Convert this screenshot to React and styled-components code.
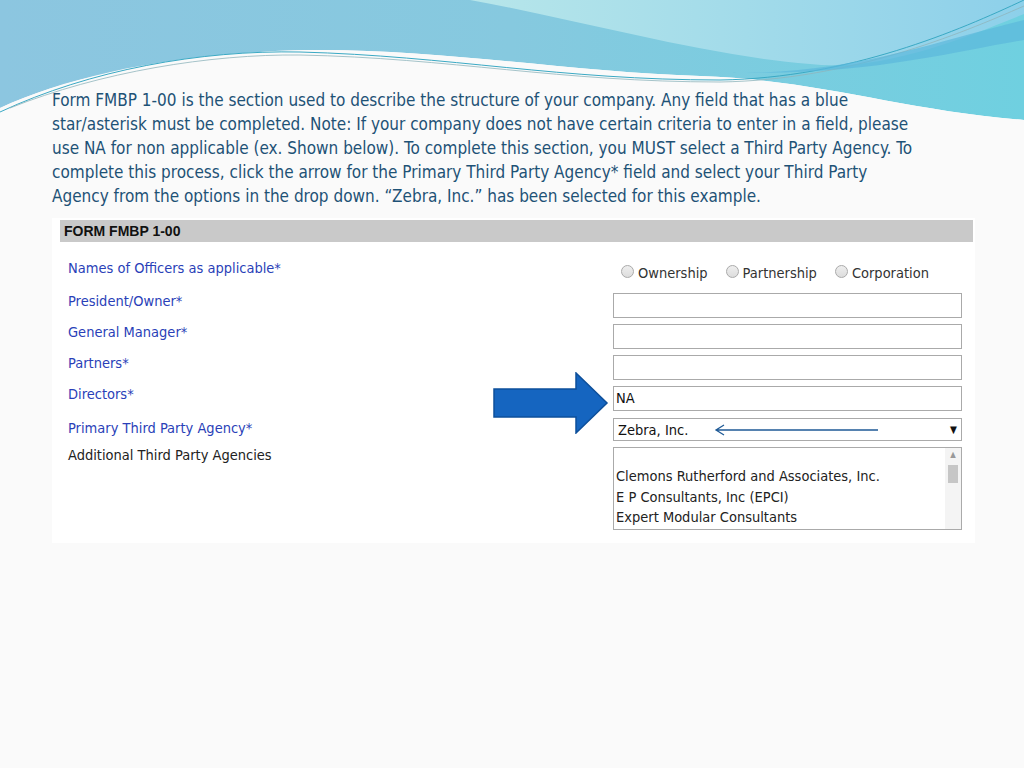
import React from 'react';
import styled, { createGlobalStyle } from 'styled-components';

const Global = createGlobalStyle`
  body { margin: 0; background: #fafafa; font-family: "Open Sans", "Liberation Sans", sans-serif; }
`;

const Slide = styled.div`
  position: relative;
  width: 1024px;
  height: 768px;
  overflow: hidden;
  background: #fafafa;
`;

const Wave = styled.svg`
  position: absolute;
  left: 0;
  top: 0;
`;

const Content = styled.div`
  position: relative;
  padding: 88px 0 0 52px;
`;

const Intro = styled.p`
  margin: 0;
  white-space: nowrap;
  font-family: "Liberation Sans Narrow", "DejaVu Sans Condensed", "Liberation Sans", sans-serif;
  font-size: 17px;
  line-height: 24px;
  color: #1e5276;
`;

const Panel = styled.div`
  position: relative;
  margin-top: 10px;
  width: 923px;
  height: 325px;
  background: #fff;
  padding: 2px 2px 0 8px;
  box-sizing: border-box;
`;

const FormHead = styled.div`
  height: 22px;
  background: #c9c9c9;
  font-family: "Liberation Sans", Arial, sans-serif;
  font-weight: bold;
  font-size: 14px;
  line-height: 22px;
  padding-left: 4px;
  color: #111;
`;

const Grid = styled.div`
  display: grid;
  grid-template-columns: 545px 349px;
  padding: 0 0 0 8px;
  font-family: "DejaVu Sans Condensed", "Liberation Sans", sans-serif;
  font-size: 14.5px;
`;

const Label = styled.div`
  color: ${p => (p.plain ? '#222' : '#2a3fb8')};
  height: ${p => p.h || 31}px;
  padding-top: ${p => p.pt || 0}px;
  box-sizing: border-box;
`;

const Cell = styled.div`
  height: ${p => p.h || 31}px;
  padding-top: ${p => p.pt || 0}px;
  box-sizing: border-box;
`;

const Radios = styled.div`
  display: flex;
  gap: 18px;
  padding-left: 8px;
  color: #333;
`;

const Radio = styled.span`
  display: flex;
  align-items: center;
  gap: 4px;
  &::before {
    content: '';
    width: 11px;
    height: 11px;
    border-radius: 50%;
    border: 1px solid #aaa;
    background: linear-gradient(#eee, #ddd);
    margin-top: -4px;
  }
`;

const Input = styled.div`
  height: 25px;
  border: 1px solid #aaa;
  box-sizing: border-box;
  padding: 3px 2px;
  color: #111;
  background: #fff;
`;

const Select = styled(Input)`
  height: 23px;
  padding: 2px 4px;
  display: flex;
  align-items: center;
  justify-content: space-between;
  position: relative;
`;

const ListBox = styled(Input)`
  height: 83px;
  padding: 18px 0 0 2px;
  position: relative;
  line-height: 20.5px;
  color: #222;
`;

const Scroll = styled.div`
  position: absolute;
  right: 0;
  top: 0;
  width: 16px;
  height: 100%;
  background: #f4f4f4;
  font-size: 8px;
  color: #999;
  text-align: center;
  line-height: 14px;
  & > i {
    display: block;
    width: 10px;
    height: 18px;
    margin: 3px auto;
    background: #c6c6c6;
  }
`;

const BigArrow = styled.svg`
  position: absolute;
  left: 441px;
  top: 154px;
`;

export default function App() {
  return (
    <Slide>
      <Global />
      <Wave width="1024" height="120" viewBox="0 0 1024 120">
        <defs>
          <linearGradient id="g1" x1="0" y1="0" x2="1" y2="0">
            <stop offset="0" stopColor="#8cc6e0" />
            <stop offset="0.5" stopColor="#86c9df" />
            <stop offset="1" stopColor="#6fd0e0" />
          </linearGradient>
          <linearGradient id="g2" x1="0" y1="0" x2="1" y2="0">
            <stop offset="0" stopColor="#b7e6ea" />
            <stop offset="1" stopColor="#8dd0ea" />
          </linearGradient>
        </defs>
        <path d="M0 0 H1024 V120 C900 110 820 80 700 76 C560 72 400 42 260 52 C150 60 60 80 0 108 Z" fill="url(#g1)" />
        <path d="M470 0 H1024 V14 C960 40 880 72 810 64 C700 55 580 20 470 0 Z" fill="url(#g2)" />
        <path d="M0 108 C60 80 150 58 260 52 C400 42 560 72 700 76 C820 80 900 110 1024 120 V120 H0 Z" fill="#fafafa" />
        <path d="M0 112 C90 70 200 50 300 52 C450 56 560 80 720 80 C850 78 960 30 1024 0" stroke="#3aa9c4" strokeWidth="1" fill="none" />
        <path d="M10 108 C100 72 210 54 300 55 C450 58 560 82 720 82 C850 80 960 34 1024 6" stroke="#8fb5bd" strokeWidth="0.8" fill="none" />
        <path d="M720 72 C840 78 940 40 1024 20 V40 C960 50 860 78 720 72 Z" fill="#5bb8dc" opacity="0.7" />
      </Wave>
      <Content>
        <Intro>
          Form FMBP 1-00 is the section used to describe the structure of your company. Any field that has a blue<br />
          star/asterisk must be completed. Note: If your company does not have certain criteria to enter in a field, please<br />
          use NA for non applicable (ex. Shown below). To complete this section, you MUST select a Third Party Agency. To<br />
          complete this process, click the arrow for the Primary Third Party Agency* field and select your Third Party<br />
          Agency from the options in the drop down. “Zebra, Inc.” has been selected for this example.
        </Intro>
        <Panel>
          <FormHead>FORM FMBP 1-00</FormHead>
          <Grid>
            <Label h={51} pt={18}>Names of Officers as applicable*</Label>
            <Cell h={51} pt={23}>
              <Radios>
                <Radio>Ownership</Radio>
                <Radio>Partnership</Radio>
                <Radio>Corporation</Radio>
              </Radios>
            </Cell>
            <Label h={31}>President/Owner*</Label>
            <Cell><Input /></Cell>
            <Label>General Manager*</Label>
            <Cell><Input /></Cell>
            <Label>Partners*</Label>
            <Cell><Input /></Cell>
            <Label h={32}>Directors*</Label>
            <Cell h={32}><Input>NA</Input></Cell>
            <Label h={29} pt={2}>Primary Third Party Agency*</Label>
            <Cell h={29}>
              <Select>
                <span>Zebra, Inc.</span>
                <svg width="168" height="12" viewBox="0 0 168 12" style={{ position: 'absolute', left: 100, top: 5 }}>
                  <path d="M2 6 H164 M10 1 L2 6 L10 11" stroke="#1f5a96" strokeWidth="1.3" fill="none" />
                </svg>
                <span style={{ fontSize: 10 }}>▼</span>
              </Select>
            </Cell>
            <Label plain>Additional Third Party Agencies</Label>
            <Cell h={90}>
              <ListBox>
                <div>Clemons Rutherford and Associates, Inc.</div>
                <div>E P Consultants, Inc (EPCI)</div>
                <div>Expert Modular Consultants</div>
                <Scroll>▲<i /></Scroll>
              </ListBox>
            </Cell>
          </Grid>
          <BigArrow width="116" height="62" viewBox="0 0 116 62">
            <path d="M1 17 H83 V1 L114 31 L83 61 V45 H1 Z" fill="#1565c0" stroke="#0d4f9a" strokeWidth="1.5" />
          </BigArrow>
        </Panel>
      </Content>
    </Slide>
  );
}
